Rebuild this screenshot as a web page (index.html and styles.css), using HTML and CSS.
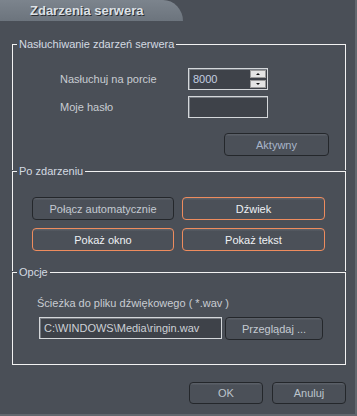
FILE: index.html
```html
<!DOCTYPE html>
<html>
<head>
    <title>Zdarzenia serwera</title>
    <link rel="stylesheet" href="styles.css">
</head>
<body>
    <div class="window">
        <div class="tab">Zdarzenia serwera</div>

        <fieldset class="group group-listen">
            <legend>Nasłuchiwanie zdarzeń serwera</legend>
            <div class="form-grid">
                <label class="label">Nasłuchuj na porcie</label>
                <div class="field spin">
                    <span class="value">8000</span>
                    <div class="spin-buttons">
                        <span class="spin-btn"><span class="arrow-up"></span></span>
                        <span class="spin-btn"><span class="arrow-down"></span></span>
                    </div>
                </div>
                <label class="label">Moje hasło</label>
                <div class="field"></div>
            </div>
            <button class="btn btn-active">Aktywny</button>
        </fieldset>

        <fieldset class="group group-event">
            <legend>Po zdarzeniu</legend>
            <div class="btn-grid">
                <button class="btn">Połącz automatycznie</button>
                <button class="btn btn-on">Dźwiek</button>
                <button class="btn btn-on">Pokaż okno</button>
                <button class="btn btn-on">Pokaż tekst</button>
            </div>
        </fieldset>

        <fieldset class="group group-options">
            <legend>Opcje</legend>
            <div class="path-label">Ścieżka do pliku dźwiękowego ( *.wav )</div>
            <div class="path-row">
                <div class="field path-field"><span class="value">C:\WINDOWS\Media\ringin.wav</span></div>
                <button class="btn btn-browse">Przeglądaj ...</button>
            </div>
        </fieldset>

        <div class="footer">
            <button class="btn btn-footer">OK</button>
            <button class="btn btn-footer">Anuluj</button>
        </div>
    </div>
</body>
</html>
```

FILE: styles.css
```css
body {
    margin: 0;
    padding: 0;
    background-color: #4a4f57;
    font-family: "Liberation Sans", Arial, sans-serif;
    font-size: 11px;
    color: #c8ccd2;
}

.window {
    width: 357px;
    height: 416px;
    box-sizing: border-box;
    background-color: #4a4f57;
    border-right: 2px solid #62676e;
    border-bottom: 2px solid #62676e;
}

.tab {
    width: 183px;
    height: 21px;
    box-sizing: border-box;
    padding-left: 30px;
    line-height: 21px;
    font-size: 13px;
    font-weight: bold;
    color: #dde1e6;
    text-shadow: 1px 1px 0 #2b2e33;
    background: linear-gradient(#7c848d, #6c747d);
    border-top-right-radius: 20px 21px;
    margin-bottom: 16px;
}

.group {
    margin: 0 0 0 12px;
    padding: 0;
    width: 334px;
    box-sizing: border-box;
    border: 1px solid #f2f2f2;
    min-width: 0;
}

.group legend {
    margin-left: 4px;
    padding: 0 2px;
    line-height: 14px;
    color: #d4dae2;
}

/* upper groups share their bottom edge with the next group's top line */
.group-listen {
    height: 133px;
    border-bottom: none;
}

.group-event {
    height: 107px;
    margin-top: -6px;
    border-bottom: none;
}

.group-options {
    height: 100px;
    margin-top: -6px;
}

.form-grid {
    display: grid;
    grid-template-columns: 128px 80px;
    grid-auto-rows: 22px;
    row-gap: 6px;
    padding: 17px 0 0 47px;
    align-items: center;
}

.label {
    color: #c8ccd2;
}

.field {
    height: 22px;
    box-sizing: border-box;
    background-color: #3e4249;
    border: 1px solid #d4d7da;
    box-shadow: inset 1px 1px 0 #767b82;
    display: flex;
    align-items: center;
    color: #c4cee0;
}

.field .value {
    padding-left: 4px;
    flex: 1;
}

.spin-buttons {
    display: flex;
    flex-direction: column;
    gap: 2px;
    margin-right: 1px;
}

.spin-btn {
    width: 16px;
    height: 8px;
    background-color: #e4e4e4;
    border: 1px solid #9a9a9a;
    box-sizing: border-box;
    display: flex;
    align-items: center;
    justify-content: center;
}

.arrow-up {
    border-left: 2px solid transparent;
    border-right: 2px solid transparent;
    border-bottom: 2px solid #111;
}

.arrow-down {
    border-left: 2px solid transparent;
    border-right: 2px solid transparent;
    border-top: 2px solid #111;
}

.btn {
    height: 23px;
    box-sizing: border-box;
    padding: 0;
    font-family: "Liberation Sans", Arial, sans-serif;
    font-size: 11px;
    color: #c4cad2;
    background: linear-gradient(#5a5f67 0, #5a5f67 1px, #4b5058 2px, #4b5058);
    border: 1px solid #24272b;
    border-radius: 4px;
    cursor: pointer;
}

.btn-active {
    display: block;
    width: 105px;
    margin: 15px 0 0 211px;
    color: #a9b6ca;
}

.btn-grid {
    display: grid;
    grid-template-columns: 142px 143px;
    grid-auto-rows: 23px;
    gap: 8px;
    padding: 19px 0 0 19px;
}

.btn-on {
    border-color: #ee8c5e;
    color: #eef0f4;
}

.path-label {
    padding: 17px 0 0 24px;
    line-height: 14px;
    color: #c8ccd2;
}

.path-row {
    display: flex;
    gap: 3px;
    margin: 7px 0 0 26px;
}

.path-field {
    width: 183px;
    color: #cdd1d6;
}

.btn-browse {
    width: 98px;
}

.footer {
    display: flex;
    justify-content: flex-end;
    gap: 9px;
    margin: 17px 9px 0 0;
}

.btn-footer {
    width: 74px;
    height: 22px;
    color: #bcc4cc;
}
```
